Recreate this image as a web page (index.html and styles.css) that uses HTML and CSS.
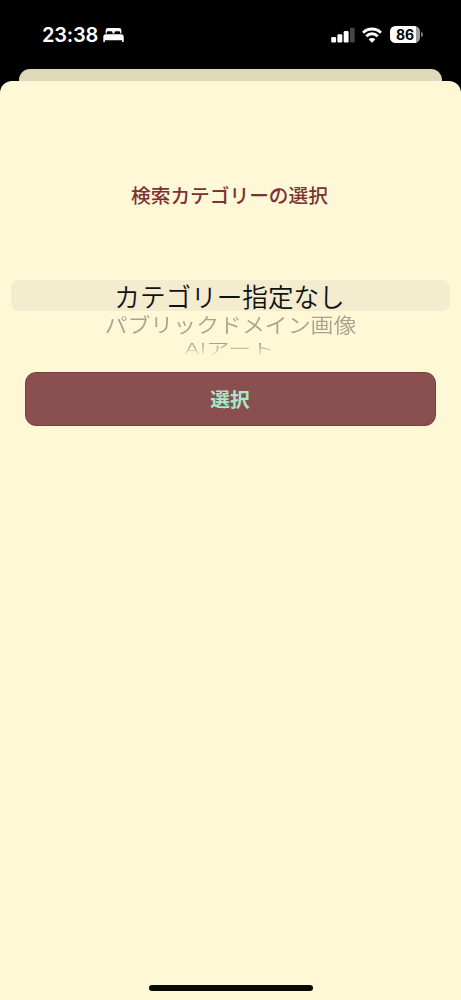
FILE: index.html
```html
<!DOCTYPE html>
<html lang="ja">
<head>
<meta charset="utf-8">
<title>検索カテゴリーの選択</title>
<link rel="stylesheet" href="styles.css">
</head>
<body>
<div class="phone">
  <header class="status">
    <div class="status-left">
      <span class="clock">23:38</span>
      <svg class="bed" viewBox="0 0 21 16" width="21" height="16" fill="#fff">
        <path d="M2.600 6.600V3.400Q2.600 1 5 1h11q2.400 0 2.400 2.400v3.200h-1.200V5.600q0-1.300-1.300-1.300h-3.100q-1.300 0-1.300 1.300v1h-2v-1q0-1.300-1.300-1.300H5.100q-1.300 0-1.300 1.300v1z"/>
        <path d="M2.800 7.300h15.400q2.500 0 2.500 2.500v4.700q0 .8-.8.800t-.8-.8v-1.200H1.900v1.200q0 .8-.8.800t-.8-.8V9.800q0-2.500 2.500-2.500z"/>
      </svg>
    </div>
    <div class="status-right">
      <svg class="signal" viewBox="0 0 24 16" width="24" height="16" fill="#fff">
        <rect x=".2" y="10" width="4.900" height="5.500" rx="1.300"/>
        <rect x="6.400" y="7.200" width="4.900" height="8.300" rx="1.300"/>
        <rect x="12.700" y="4" width="4.900" height="11.500" rx="1.300"/>
        <rect x="19" y=".8" width="4.700" height="14.700" rx="1.300" fill="#454545"/>
      </svg>
      <svg class="wifi" viewBox="0 0 20 16" width="20" height="16" fill="none" stroke="#fff" stroke-width="2.900">
        <path d="M1.100 5.700a12.600 12.600 0 0 1 17.800 0"/>
        <path d="M4.300 9.200a8 8 0 0 1 11.400 0"/>
        <path d="M10 15.800l-3.300-3.400a4.600 4.600 0 0 1 6.600 0z" fill="#fff" stroke="none"/>
      </svg>
      <div class="battery"><span class="battery-body">86</span><span class="battery-cap"></span></div>
    </div>
  </header>
  <div class="back-sheet"></div>
  <main class="sheet">
    <h1 class="title">検索カテゴリーの選択</h1>
    <div class="picker">
      <div class="row-selected">カテゴリー指定なし</div>
      <div class="row-next"><span class="next-text">パブリックドメイン画像</span></div>
      <div class="row-last"><span class="last-text">AIアート</span></div>
    </div>
    <button class="choose">選択</button>
    <div class="home-bar"></div>
  </main>
</div>
</body>
</html>
```
FILE: styles.css
```css
* { box-sizing: border-box; }
body { margin: 0; background: #000; }
.phone {
  width: 461px;
  height: 1000px;
  overflow: hidden;
  background: #000;
  display: flex;
  flex-direction: column;
  font-family: Inter, "Noto Sans CJK JP", sans-serif;
}
.status {
  height: 69px;
  flex: none;
  display: flex;
  justify-content: space-between;
  align-items: flex-start;
  padding: 22px 38px 0 42px;
  color: #fff;
}
.status-left, .status-right { display: flex; align-items: center; height: 25px; }
.status-left { gap: 5px; }
.clock { font-size: 20px; font-weight: 600; line-height: 25px; letter-spacing: -.2px; padding-top: 1px; }
.signal { margin-right: 7px; }
.wifi { margin-right: 8px; }
.status-right .signal, .status-right .wifi { flex: none; }
.battery { display: flex; align-items: center; gap: 1px; }
.battery-body {
  width: 30px;
  height: 17px;
  border-radius: 5.500px;
  background: linear-gradient(90deg, #fff 86%, #9b9b9b 86%);
  color: #000;
  font-size: 14px;
  font-weight: 700;
  line-height: 17px;
  text-align: center;
}
.battery-cap { width: 2px; height: 5px; border-radius: 0 2px 2px 0; background: #777; }
.back-sheet {
  height: 12px;
  flex: none;
  margin: 0 19px;
  border-radius: 11px 11px 0 0;
  background: #dfd9b9;
}
.sheet {
  flex: 1;
  display: flex;
  flex-direction: column;
  border-radius: 12px 12px 0 0;
  background: #fff8d6;
}
.title {
  margin: 99px 2px 0 0;
  height: 30px;
  line-height: 30px;
  text-align: center;
  font-family: "Noto Sans CJK JP", sans-serif;
  font-size: 19.700px;
  font-weight: 500;
  color: #7b3335;
}
.picker {
  margin: 70px 11px 0;
  height: 92px;
  font-family: "Noto Sans CJK JP", sans-serif;
  font-weight: 350;
  text-align: center;
  white-space: nowrap;
}
.row-selected {
  height: 31px;
  padding-right: 2px;
  line-height: 31px;
  border-radius: 8px;
  background: #f3ecce;
  color: #111;
  font-size: 25.600px;
}
.row-next { height: 26px; line-height: 26px; font-size: 22.900px; color: #a8a38c; }
.next-text { display: block; transform: scaleY(.9); }
.row-last { height: 24px; line-height: 24px; font-size: 23.300px; }
.last-text {
  display: block;
  padding-right: 2px;
  transform: scaleY(.64);
  font-family: Inter, "Noto Sans CJK JP", sans-serif;
  font-weight: 350;
  color: transparent;
  background: linear-gradient(#98937d 0%, #fff8d6 105%);
  background-clip: text;
}
.choose {
  margin: 0 25px;
  height: 54px;
  padding: 0 1px 0 0;
  border: 1px solid #7b3d3d;
  border-radius: 11px;
  background: #8a4f4f;
  color: #a5ebc9;
  font-family: "Noto Sans CJK JP", sans-serif;
  font-size: 19.700px;
  font-weight: 700;
  line-height: 52px;
}
.home-bar {
  width: 164px;
  height: 6px;
  margin: auto auto 9px;
  border-radius: 3px;
  background: #080a03;
}
```
